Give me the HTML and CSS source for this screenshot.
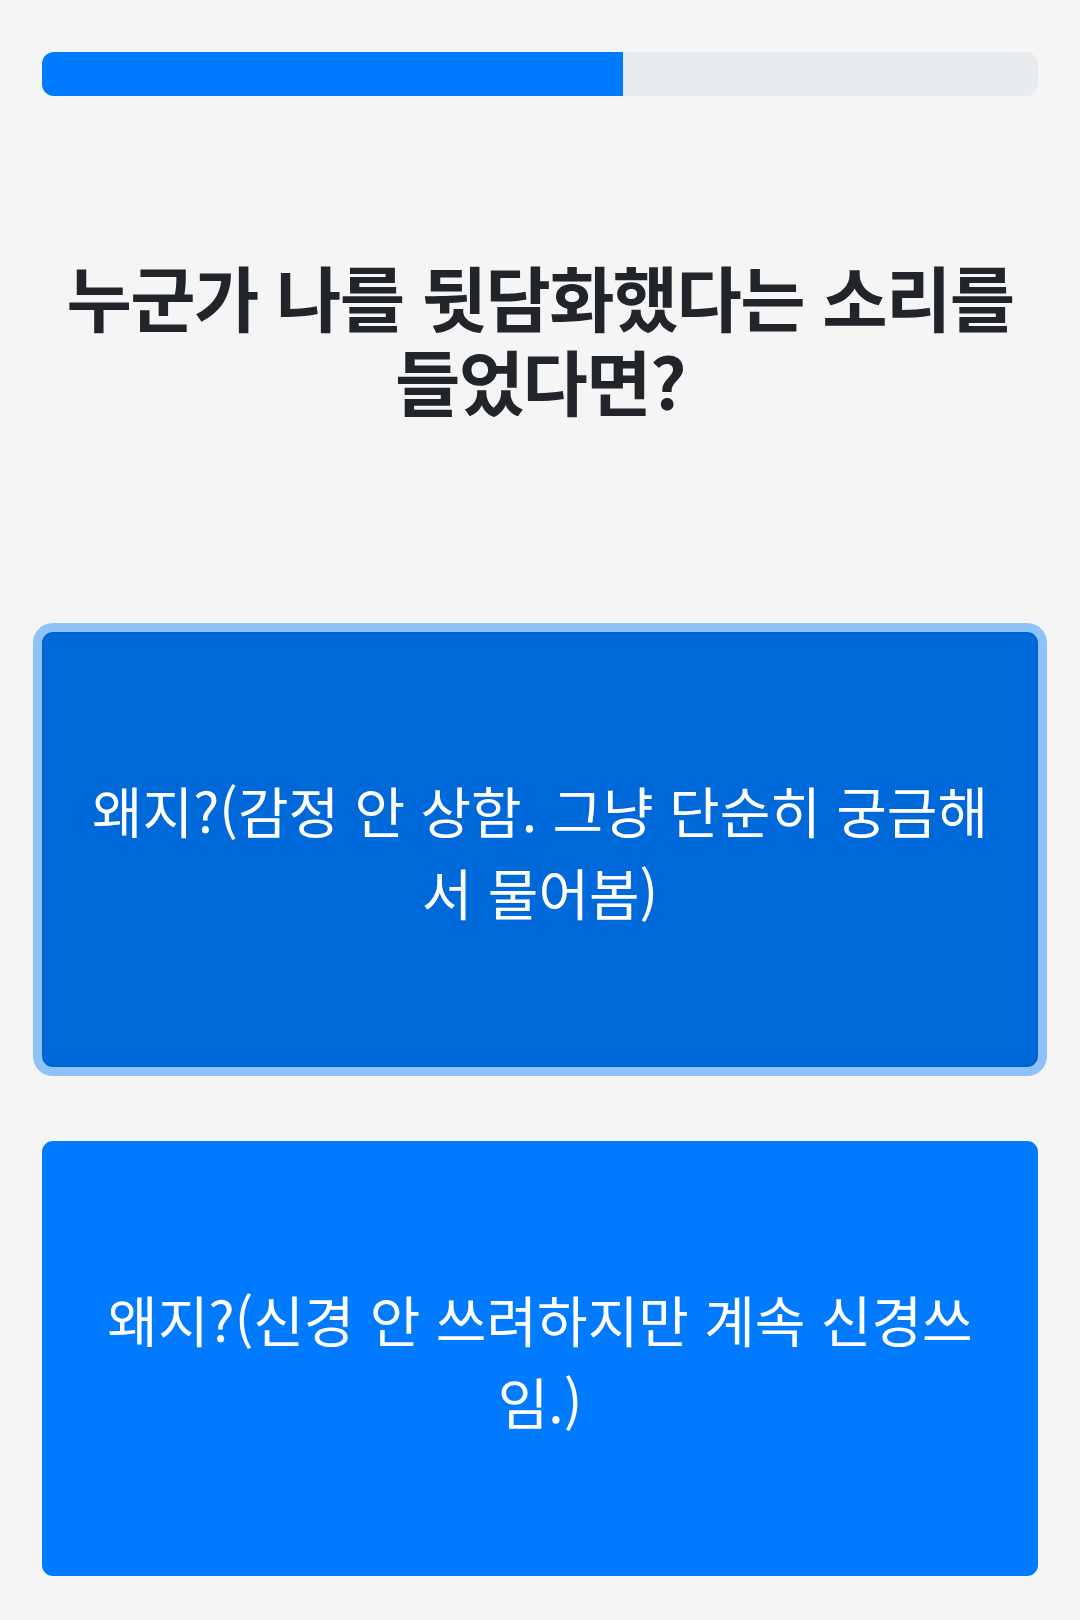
FILE: index.html
```html
<!DOCTYPE html>
<html lang="ko">
	<head>
		<meta charset="utf-8">
		<title>심리 테스트</title>
		<link rel="stylesheet" href="styles.css">
	</head>
	<body>

		<main class="quiz">
			<div class="progress">
				<div class="progress-bar" style="width: 58.3%"></div>
			</div>

			<h1 class="question">누군가 나를 뒷담화했다는 소리를 들었다면?</h1>

			<div class="answers">
				<button class="answer focused">왜지?(감정 안 상함. 그냥 단순히 궁금해서 물어봄)</button>
				<button class="answer">왜지?(신경 안 쓰려하지만 계속 신경쓰임.)</button>
			</div>
		</main>

	</body>
</html>
```

FILE: styles.css
```css
body {
	background: #f5f5f5;
	color: #212529;
	font-family: "Noto Sans CJK KR", "Noto Sans", sans-serif;
	margin: 0;
}

.quiz {
	padding: 52px 42px 0 42px;
	display: flex;
	flex-direction: column;
}

/* progress */
.progress {
	height: 44px;
	background: #e9ecef;
	border-radius: 12px;
	overflow: hidden;
	display: flex;
}

.progress-bar {
	background: #007bff;
}

/* question */
.question {
	margin: 157px 0 211px 0;
	text-align: center;
	font-size: 71px;
	font-weight: 700;
	line-height: 84px;
	letter-spacing: -1.6px;
	word-break: keep-all;
}

/* answers */
.answers {
	display: flex;
	flex-direction: column;
	gap: 74px;
}

.answer {
	min-height: 435px;
	padding: 0 41px;
	border: 2px solid #007bff;
	border-radius: 11px;
	background: #007bff;
	color: #fff;
	font-family: inherit;
	font-size: 55px;
	line-height: 82px;
	text-align: center;
}

.answer.focused {
	background: #0069d9;
	border-color: #0062cc;
	box-shadow: 0 0 0 9px #8ec2fa;
}
```
